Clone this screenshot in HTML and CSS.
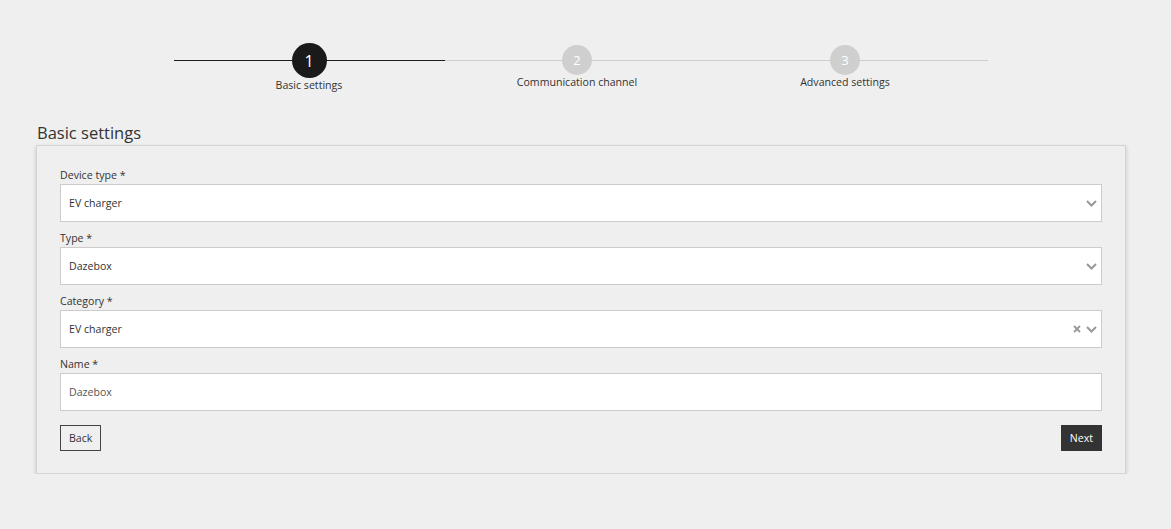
FILE: index.html
```html
<!DOCTYPE html>
<html lang="en">
<head>
<meta charset="utf-8">
<title>Basic settings</title>
<link rel="stylesheet" href="styles.css">
</head>
<body>
<div class="stepper">
  <div class="step active">
    <div class="circle">1</div>
    <div class="step-label">Basic settings</div>
  </div>
  <div class="step">
    <div class="circle">2</div>
    <div class="step-label">Communication channel</div>
  </div>
  <div class="step">
    <div class="circle">3</div>
    <div class="step-label">Advanced settings</div>
  </div>
</div>

<main class="main">
  <h1 class="title">Basic settings</h1>
  <section class="card">
    <div class="field">
      <label class="label">Device type *</label>
      <div class="input select">
        <span class="value">EV charger</span>
        <span class="icons">
          <svg class="chevron" width="11" height="7" viewBox="0 0 11 7"><polyline points="1,1 5.5,5.5 10,1" fill="none" stroke="#999" stroke-width="2"/></svg>
        </span>
      </div>
    </div>
    <div class="field">
      <label class="label">Type *</label>
      <div class="input select">
        <span class="value">Dazebox</span>
        <span class="icons">
          <svg class="chevron" width="11" height="7" viewBox="0 0 11 7"><polyline points="1,1 5.5,5.5 10,1" fill="none" stroke="#999" stroke-width="2"/></svg>
        </span>
      </div>
    </div>
    <div class="field">
      <label class="label">Category *</label>
      <div class="input select">
        <span class="value">EV charger</span>
        <span class="icons">
          <svg class="clear" width="8" height="8" viewBox="0 0 8 8"><path d="M1 1L7 7M7 1L1 7" fill="none" stroke="#999" stroke-width="1.8"/></svg>
          <svg class="chevron" width="11" height="7" viewBox="0 0 11 7"><polyline points="1,1 5.5,5.5 10,1" fill="none" stroke="#999" stroke-width="2"/></svg>
        </span>
      </div>
    </div>
    <div class="field">
      <label class="label">Name *</label>
      <div class="input text">
        <span class="value muted">Dazebox</span>
      </div>
    </div>
    <div class="actions">
      <button class="btn btn-outline">Back</button>
      <button class="btn btn-dark">Next</button>
    </div>
  </section>
</main>
</body>
</html>
```

FILE: styles.css
```css
* { box-sizing: border-box; }

body {
  margin: 0;
  padding: 43px 0 0;
  background: #efefef;
  font-family: "Open Sans", "Liberation Sans", sans-serif;
  color: #333;
}

.stepper {
  margin-left: 174px;
  width: 814px;
  padding-left: 1px;
  display: grid;
  grid-template-columns: repeat(3, 268px);
  background: linear-gradient(to right, #1c1c1c 0 271px, #cdcdcd 271px) no-repeat 0 17px / 100% 1px;
}

.step {
  display: flex;
  flex-direction: column;
  align-items: center;
}

.circle {
  width: 30px;
  height: 30px;
  margin-top: 2px;
  border-radius: 50%;
  background: #cfcfcf;
  color: #fff;
  font-size: 13px;
  display: flex;
  align-items: center;
  justify-content: center;
}

.step.active .circle {
  width: 35px;
  height: 35px;
  margin-top: 0;
  background: #1a1a1a;
  font-size: 16px;
}

.step-label {
  font-size: 10.6px;
  line-height: 14px;
  color: #333;
}

.main {
  margin-left: 36px;
  width: 1090px;
}

.title {
  margin: 29px 0 1px 1px;
  font-size: 16.5px;
  line-height: 23px;
  font-weight: 400;
  color: #333;
}

.card {
  border: 1px solid #d4d4d4;
  background: #efefef;
  box-shadow: 0 2px 4px rgba(0, 0, 0, 0.18);
  padding: 21px 23px 22px;
}

.field {
  margin-bottom: 8px;
}

.label {
  display: block;
  font-size: 10.6px;
  line-height: 16px;
  margin-bottom: 1px;
  color: #333;
}

.input {
  height: 38px;
  background: #fff;
  border: 1px solid #cccccc;
  display: flex;
  align-items: center;
  padding: 0 4px 0 8px;
  font-size: 10.6px;
  color: #333;
}

.value { flex: 1; }
.muted { color: #555; }

.icons {
  display: flex;
  align-items: center;
  gap: 5px;
}

.actions {
  margin-top: 14px;
  display: flex;
  justify-content: space-between;
}

.btn {
  height: 26px;
  padding: 0 8px;
  font-family: inherit;
  font-size: 10.6px;
  line-height: 24px;
  border-radius: 0;
  cursor: pointer;
}

.btn-outline {
  background: transparent;
  border: 1px solid #444;
  color: #333;
}

.btn-dark {
  background: #333;
  border: 1px solid #333;
  color: #fff;
}
```
